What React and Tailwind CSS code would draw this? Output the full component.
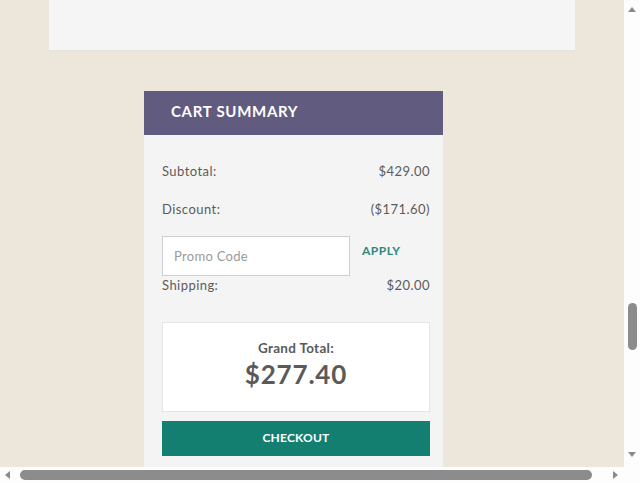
import React from 'react';

const Row = ({ label, value, className = '' }) => (
    <div className={`flex justify-between items-center text-[13px] tracking-[0.45px] text-[#5b5b5b] ${className}`}>
        <span>{label}</span>
        <span>{value}</span>
    </div>
);

const App = () => {
    return (
        <div className="w-[640px] h-[483px] overflow-hidden flex bg-white" style={{ fontFamily: 'Lato, "Open Sans", sans-serif' }}>
            <div className="w-[624px] flex flex-col">
                {/* Page */}
                <div className="flex-1 bg-[#ede6da] overflow-hidden">
                    <div className="ml-[49px] w-[526px] h-[51px] bg-[#f5f5f5] border-b border-[#e6e3de]"></div>

                    {/* Cart summary */}
                    <div className="ml-[144px] mt-[40px] w-[299px]">
                        <div className="h-[44px] bg-[#625b80] flex items-center pl-[27px] pb-[4px]">
                            <h2 className="text-white font-bold text-[15px] tracking-[0.7px] uppercase">Cart Summary</h2>
                        </div>
                        <div className="bg-[#f4f4f4] pl-[18px] pr-[13px] pt-[27px] pb-[20px]">
                            <Row label="Subtotal:" value="$429.00" />
                            <Row label="Discount:" value="($171.60)" className="mt-[18px]" />
                            <div className="flex items-start mt-[17px]">
                                <input
                                    type="text"
                                    placeholder="Promo Code"
                                    className="w-[188px] h-[40px] bg-white border border-[#cfcfcf] px-[11px] text-[13px] tracking-[0.3px] text-[#5b5b5b] placeholder:text-[#9a9a9a] outline-none"
                                />
                                <button className="ml-[12px] mt-[6px] text-[12px] font-bold text-[#2c8a7e] tracking-[0.5px]">APPLY</button>
                            </div>
                            <Row label="Shipping:" value="$20.00" />

                            <div className="mt-[26px] h-[90px] bg-white border border-[#e4e4e4] flex flex-col items-center justify-center pb-[4px]">
                                <p className="text-[13.5px] font-bold text-[#5a5a5a] leading-none tracking-[0.3px]">Grand Total:</p>
                                <p className="text-[26px] font-bold text-[#5a5a5a] leading-none mt-[6px] tracking-[0.8px]">$277.40</p>
                            </div>

                            <button className="mt-[9px] w-full h-[35px] bg-[#127f70] text-white text-[12px] font-bold tracking-[0.2px]">CHECKOUT</button>
                        </div>
                    </div>
                </div>

                {/* Horizontal scrollbar */}
                <div className="h-[16px] bg-[#fdfdfd] flex items-center relative">
                    <svg className="absolute left-[5px] top-[4px]" width="6" height="8" viewBox="0 0 6 8"><path d="M5 0 L0 4 L5 8 Z" fill="#8a8a8a" /></svg>
                    <div className="ml-[20px] w-[572px] h-[10px] rounded-full bg-[#8c8c8c]"></div>
                    <svg className="absolute left-[612px] top-[4px]" width="6" height="8" viewBox="0 0 6 8"><path d="M1 0 L6 4 L1 8 Z" fill="#8a8a8a" /></svg>
                </div>
            </div>

            {/* Vertical scrollbar */}
            <div className="w-[16px] h-full bg-[#fdfdfd] relative">
                <svg className="absolute left-[4px] top-[7px]" width="8" height="6" viewBox="0 0 8 6"><path d="M0 5 L4 0 L8 5 Z" fill="#8a8a8a" /></svg>
                <div className="absolute left-[4px] top-[303px] w-[9px] h-[47px] rounded-full bg-[#8c8c8c]"></div>
                <svg className="absolute left-[4px] top-[452px]" width="8" height="6" viewBox="0 0 8 6"><path d="M0 0 L8 0 L4 5 Z" fill="#8a8a8a" /></svg>
            </div>
        </div>
    );
};

export default App;
